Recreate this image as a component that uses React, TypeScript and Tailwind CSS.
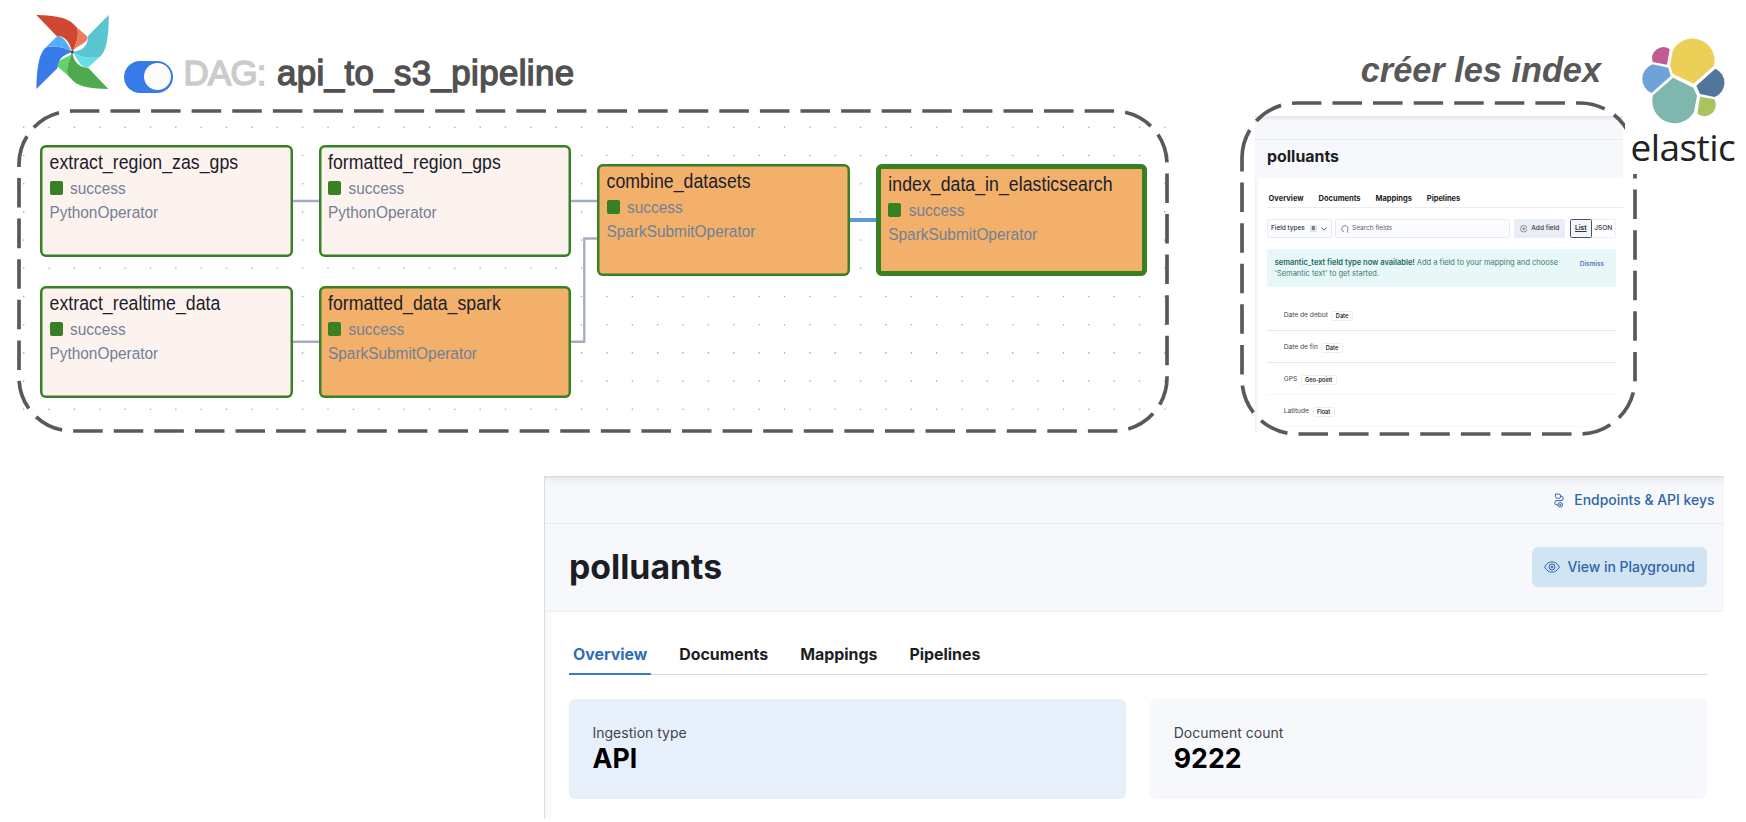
import type { ReactNode } from 'react';

type TaskProps = {
  name: string;
  operator: string;
  place: string;
  tone: string;
};

function Task({ name, operator, place, tone }: TaskProps) {
  return (
    <div className={`absolute h-[112.500px] rounded-[6px] ${place} ${tone}`}>
      <div className="h-[25px] origin-left scale-y-[1.09] whitespace-nowrap text-[17.7px] leading-[24px] tracking-[0.04px] text-[#1a202c]">{name}</div>
      <div className="flex h-[25px] items-center gap-[7.500px]">
        <span className="mb-[2px] h-[14px] w-[13px] rounded-[2px] bg-[#378023]" />
        <span className="scale-y-[1.09] text-[15.45px] leading-[24px] text-[#718096]">success</span>
      </div>
      <div className="origin-left scale-y-[1.09] whitespace-nowrap text-[15.4px] leading-[24px] text-[#718096]">{operator}</div>
    </div>
  );
}

function Pinwheel() {
  return (
    <svg className="absolute left-[20px] top-0 h-[110px] w-[100px]" viewBox="0 0 300 330">
      <path fill="#d14832" d="M49 45C90 46 142 50 161 73L172 84C178 110 168 135 157 156C150 132 140 115 122 109L112 110Z" />
      <path fill="#ee7b5f" d="M172 83L201 109Q205 114 200 121C190 136 166 138 157 156C168 135 178 110 172 83Z" />
      <path fill="#5bc4d1" d="M266 45C267 95 262 145 245 165L240 170C215 178 180 172 157 156C180 152 198 146 203 120L203 109Z" />
      <path fill="#68ddea" d="M240 170L207 200Q200 206 192 201C176 192 170 172 157 156C180 172 215 178 240 170Z" />
      <path fill="#4fa94f" d="M265 267C220 266 178 262 160 243L143 226C137 205 147 178 157 156C160 182 174 203 205 204Z" />
      <path fill="#60d369" d="M143 226L115 202Q108 197 114 188C125 172 150 174 157 156C147 178 137 205 143 226Z" />
      <path fill="#367be7" d="M49 267C50 220 54 170 72 148L76 143C100 135 135 142 157 156C140 162 114 170 112 205Z" />
      <path fill="#52aff7" d="M76 143L109 111Q115 106 123 111C138 119 146 140 157 156C135 142 100 135 76 143Z" />
      <circle cx="157" cy="156" r="4.5" fill="#4a4848" />
    </svg>
  );
}

function ElasticLogo() {
  return (
    <div className="absolute left-[405px] top-[20px] h-[154px] w-[121px] bg-white pt-[10.500px]">
      <svg className="h-[95px] w-[115px]" viewBox="0 0 345 285">
        <path fill="#ebcf56" d="M144 57A66.500 66.500 0 0 1 267 104L206 158L143 128L135 103Z" />
        <path fill="#7fb6ae" d="M144 140L205 170L216 195L207 243A67 67 0 0 1 84 193Z" />
        <path fill="#70a2da" d="M83 100L130 110L137 135L80 186A46 46 0 0 1 83 100Z" />
        <path fill="#c25a93" d="M83 93L126 101L134 54A34 34 0 0 0 83 93Z" />
        <path fill="#52769b" d="M271 113A46 46 0 0 1 269 198L225 189L214 164Z" />
        <path fill="#a9c35d" d="M225 197L268 205A34 34 0 0 1 217 248Z" />
      </svg>
      <div className="ml-[5.500px] mt-[1px] whitespace-nowrap font-['Open_Sans','Noto_Sans',sans-serif] text-[37px] leading-[40px] tracking-[-0.55px] text-[#222]">elastic</div>
    </div>
  );
}

function DashedFrame({ place, w, h, r }: { place: string; w: number; h: number; r: number }) {
  const d = `M2 ${r + 2}A${r} ${r} 0 0 1 ${r + 2} 2H${w + 2 - r}A${r} ${r} 0 0 1 ${w + 2} ${r + 2}V${h + 2 - r}A${r} ${r} 0 0 1 ${w + 2 - r} ${h + 2}H${r + 2}A${r} ${r} 0 0 1 2 ${h + 2 - r}Z`;
  return (
    <svg className={`pointer-events-none absolute ${place}`} width={w + 4} height={h + 4}>
      <path d={d} fill="none" stroke="#595959" strokeWidth="3.7" strokeDasharray="29.52 11.07" />
    </svg>
  );
}

function Dots() {
  const dots: ReactNode[] = [];
  for (let row = 0; row < 11; row++) {
    for (let col = 0; col < 46; col++) {
      dots.push(<circle key={`${row}-${col}`} cx={23.7 + col * 25.36} cy={24.3 + row * 28.2} r="0.8" />);
    }
  }
  return <g fill="#a9a9a9">{dots}</g>;
}

function FieldRow({ name, type, line }: { name: string; type: string; line: string }) {
  return (
    <div className={`flex h-[32.1px] items-center gap-[3.5px] border-b pl-[16.7px] pt-[3.5px] ${line}`}>
      <span className="text-[6.65px] text-[#41454f]">{name}</span>
      <span className="flex h-[9.5px] items-center rounded-[1.5px] border border-[#eceef3] px-[3.4px] text-[5.6px] font-semibold text-[#1d1e24]">{type}</span>
    </div>
  );
}

function MappingsPanel() {
  return (
    <div className="ml-[35px] mt-[13px] flex h-[317px] w-[368px] flex-col overflow-hidden bg-[linear-gradient(to_right,#f0f1f4,#fff_4px)] font-[Inter,sans-serif]">
      <div className="h-[24px] shrink-0 border-b border-[#eaecf1] bg-[linear-gradient(to_bottom,#e2e4ea,#f6f8fc_5px)]" />
      <div className="flex h-[38px] shrink-0 items-center bg-[#f6f8fc] pb-[4.500px] pl-[12px] text-[15.9px] font-bold text-[#1d1e24]">polluants</div>
      <div className="ml-[12px] flex h-[30px] shrink-0 gap-[14.900px] border-b border-[#e9edf3] pl-[1.6px] pt-[16px] text-[7.5px] font-bold leading-[10px] text-[#1d1e24]">
        <span>Overview</span>
        <span>Documents</span>
        <span>Mappings</span>
        <span>Pipelines</span>
      </div>
      <div className="ml-[12px] mt-[11.300px] flex h-[18.7px] w-[348.7px] shrink-0 text-[6.55px] text-[#343741]">
        <div className="flex w-[64.8px] items-center rounded-[2px] border border-[#e8ecf2] bg-[#fbfcfd] pl-[3px] pt-[0.5px]">
          <span className="font-medium tracking-[-0.05px]">Field types</span>
          <span className="ml-[5px] flex h-[7px] w-[7px] items-center justify-center rounded-[1px] bg-[#dde3ec] text-[5px] font-bold">6</span>
          <svg className="ml-[4.500px] h-[4px] w-[6px]" viewBox="0 0 6 4">
            <path d="M.5 .6L3 3.200L5.500 .6" fill="none" stroke="#343741" strokeWidth=".8" />
          </svg>
        </div>
        <div className="ml-[3.7px] flex w-[174.300px] items-center gap-[3px] rounded-[2px] border border-[#e8ecf2] bg-[#fbfcfd] pl-[4.500px] pt-[0.5px] text-[6.5px] text-[#5b6069]">
          <svg className="h-[8px] w-[8px]" viewBox="0 0 8 8">
            <path d="M3 6.900A3.200 3.200 0 1 1 6 6.200L7.600 7.700" fill="none" stroke="#4b4f59" strokeWidth=".7" />
          </svg>
          Search fields
        </div>
        <div className="ml-[4px] flex w-[51.700px] items-center gap-[4px] rounded-[2px] bg-[#e9edf5] pl-[6px] pt-[0.5px] font-medium">
          <svg className="h-[7.500px] w-[7.500px]" viewBox="0 0 8 8">
            <circle cx="4" cy="4" r="3.500" fill="none" stroke="#4b4f59" strokeWidth=".6" />
            <path d="M4 2.200V5.800M2.200 4H5.800" stroke="#4b4f59" strokeWidth=".6" />
          </svg>
          Add field
        </div>
        <div className="ml-[4.500px] flex flex-1">
          <div className="flex w-[21.700px] items-center justify-center rounded-[1.5px] border border-[#4b5261] bg-[#f2f6fa] pt-[0.5px] font-bold underline">List</div>
          <div className="flex flex-1 items-center justify-center rounded-r-[2px] border border-l-0 border-[#eceff4] bg-[#fdfdfe] pt-[1px] font-medium">JSON</div>
        </div>
      </div>
      <div className="ml-[12px] mt-[11px] flex h-[38px] w-[348.7px] shrink-0 rounded-[2px] bg-[#e8f7f7] pl-[7.700px] pt-[8px] text-[7.49px] leading-[11.200px] text-[#387a71]">
        <p className="w-[305px] whitespace-nowrap">
          <b className="font-semibold text-[#24695f]">semantic_text field type now available!</b> Add a field to your mapping and choose
          <br />
          'Semantic text' to get started.
        </p>
        <span className="mt-[2px] text-[6.5px] font-medium text-[#3a6cb4]">Dismiss</span>
      </div>
      <div className="ml-[12px] mt-[11.5px] w-[348.7px]">
        <FieldRow name="Date de début" type="Date" line="border-[#e6e8f1]" />
        <FieldRow name="Date de fin" type="Date" line="border-[#e6e8f1]" />
        <FieldRow name="GPS" type="Geo-point" line="border-[#f5f6f8]" />
        <FieldRow name="Latitude" type="Float" line="border-[#f5f6f8]" />
      </div>
    </div>
  );
}

function StatCard({ label, value, tone }: { label: string; value: string; tone: string }) {
  return (
    <div className={`h-[99.500px] flex-1 rounded-[6px] pl-[23.500px] pt-[22.500px] ${tone}`}>
      <div className="text-[14px] leading-[21px] text-[#41454f]">{label}</div>
      <div className="text-[26.7px] font-bold leading-[31px] text-black">{value}</div>
    </div>
  );
}

function OverviewPanel() {
  return (
    <section className="ml-[544px] flex h-[343px] w-[1180px] flex-col border-l border-[#dadce1] bg-[linear-gradient(to_right,#f8f8fa,#fff_9px)] font-[Inter,sans-serif] text-[#1d1e24]">
      <div className="flex h-[48px] shrink-0 items-center justify-end gap-[10.500px] border-b border-[#e8eaf0] bg-[linear-gradient(to_bottom,#d4d6dc,#e9ebf0_2px,#f3f5f9_7px,#f6f8fc_13px)] pr-[9.500px] pt-[1.5px] text-[13.95px] font-medium text-[#2f65a8]">
        <svg className="h-[15px] w-[10px]" viewBox="0 0 10 15" fill="none" stroke="#2f65a8" strokeWidth="1">
          <path d="M1.500 1H4.500A2.200 2.200 0 0 1 4.500 5.400H3.500A2 2 0 0 1 1.500 3.400Z" />
          <path d="M6.600 3.200H7A2.200 2.200 0 0 1 7 7.600H3A2.200 2.200 0 0 0 3 12H4" />
          <circle cx="6.300" cy="11.800" r="2.300" />
          <path d="M5.300 11.800H7.300M6.300 10.800V12.800" />
        </svg>
        Endpoints &amp; API keys
      </div>
      <div className="flex h-[88px] shrink-0 items-center justify-between border-b border-[#f0f2f6] bg-[#f6f8fc] pb-[1px] pl-[24px] pr-[17px]">
        <h2 className="pt-[0.5px] text-[33.8px] font-bold leading-[40px]">polluants</h2>
        <div className="flex h-[40px] w-[175px] items-center gap-[7.500px] rounded-[6px] bg-[#d1e4f3] pl-[12px] text-[13.9px] font-medium text-[#2f65a8]">
          <svg className="h-[12px] w-[16px]" viewBox="0 0 16 12" fill="none" stroke="#2f65a8" strokeWidth="1">
            <path d="M.6 6C2.600 2.600 5 .8 8 .8S13.400 2.600 15.400 6C13.400 9.400 11 11.200 8 11.200S2.600 9.400 .6 6Z" />
            <circle cx="8" cy="6" r="3" />
            <circle cx="8" cy="6" r="1" />
          </svg>
          View in Playground
        </div>
      </div>
      <nav className="ml-[24px] mr-[17px] flex h-[63px] shrink-0 gap-[24px] border-b border-[#d3dae3] text-[15.9px] font-bold leading-[24px]">
        <span className="-mb-px border-b-2 border-[#3a78c8] px-[4px] pt-[31px] text-[#316cb9]">Overview</span>
        <span className="px-[4px] pt-[31px]">Documents</span>
        <span className="px-[4px] pt-[31px]">Mappings</span>
        <span className="px-[4px] pt-[31px]">Pipelines</span>
      </nav>
      <div className="ml-[24px] mr-[17px] mt-[24px] flex gap-[24.500px]">
        <StatCard label="Ingestion type" value="API" tone="bg-[#e7f0fa]" />
        <StatCard label="Document count" value="9222" tone="bg-[#f6f8fc]" />
      </div>
    </section>
  );
}

export default function App() {
  return (
    <main className="flex h-[822px] w-[1746px] flex-col overflow-hidden bg-white font-['Liberation_Sans',Arial,sans-serif]">
      <div className="flex h-[476px] shrink-0">
        <section className="flex w-[1220px] flex-col">
          <header className="relative flex h-[103px] items-start pl-[124px]">
            <Pinwheel />
            <div className="mt-[60.500px] flex h-[32px] w-[49px] items-center justify-end rounded-full bg-[#367be7] pr-[2.500px]">
              <span className="h-[26.500px] w-[26.500px] rounded-full bg-[#fdfcfb]" />
            </div>
            <h1 className="ml-[10.500px] mt-[53.300px] flex whitespace-nowrap text-[34.8px] leading-[40px]">
              <span className="w-[93.500px] tracking-[-0.7px] text-[#cbcbcb] [-webkit-text-stroke:1.500px_#cbcbcb]">DAG:</span>
              <span className="tracking-[0.4px] text-[#515151] [-webkit-text-stroke:1.400px_#515151]">api_to_s3_pipeline</span>
            </h1>
          </header>
          <div className="relative flex-1">
            <svg className="absolute left-0 top-0 h-[373px] w-[1220px]" viewBox="0 0 1220 373">
              <Dots />
              <g fill="none" stroke="#a3aec4" strokeWidth="2.4">
                <path d="M291 98H320M570 98H598M291 238.700H320M570 238.700H584.300V135.500H598" />
                <path d="M848 117H878" stroke="#5c99dd" strokeWidth="4" />
              </g>
            </svg>
            <Task name="extract_region_zas_gps" operator="PythonOperator" place="left-[40px] top-[41.500px] w-[252.500px] pl-[9.500px] pt-[6.500px] shadow-[inset_0_0_0_2.5px_#378023]" tone="bg-[#fdf3ee]" />
            <Task name="formatted_region_gps" operator="PythonOperator" place="left-[318.500px] top-[41.500px] w-[252.500px] pl-[9.500px] pt-[6.500px] shadow-[inset_0_0_0_2.5px_#378023]" tone="bg-[#fdf3ee]" />
            <Task name="extract_realtime_data" operator="PythonOperator" place="left-[40px] top-[182.500px] w-[252.500px] pl-[9.500px] pt-[6.500px] shadow-[inset_0_0_0_2.5px_#378023]" tone="bg-[#fdf3ee]" />
            <Task name="formatted_data_spark" operator="SparkSubmitOperator" place="left-[318.500px] top-[182.500px] w-[252.500px] pl-[9.500px] pt-[6.500px] shadow-[inset_0_0_0_2.5px_#378023]" tone="bg-[#f3b06a]" />
            <Task name="combine_datasets" operator="SparkSubmitOperator" place="left-[597px] top-[60.500px] w-[252.500px] pl-[9.500px] pt-[6.500px] shadow-[inset_0_0_0_2.5px_#378023]" tone="bg-[#f3b06a]" />
            <Task name="index_data_in_elasticsearch" operator="SparkSubmitOperator" place="left-[876px] top-[60.500px] w-[270.500px] pl-[12.300px] pt-[9.500px] shadow-[inset_0_0_0_5px_#378023]" tone="bg-[#f3b06a]" />
            <DashedFrame place="left-[17px] top-[6px]" w={1148} h={320} r={53.3} />
          </div>
        </section>
        <section className="relative flex w-[526px] flex-col">
          <h1 className="h-[103px] pr-[145px] pt-[49.800px] text-right text-[34.3px] font-bold italic leading-[40px] text-[#585858]">créer les index</h1>
          <MappingsPanel />
          <DashedFrame place="left-[20px] top-[101.300px]" w={393} h={331} r={55.1} />
          <ElasticLogo />
        </section>
      </div>
      <OverviewPanel />
    </main>
  );
}
